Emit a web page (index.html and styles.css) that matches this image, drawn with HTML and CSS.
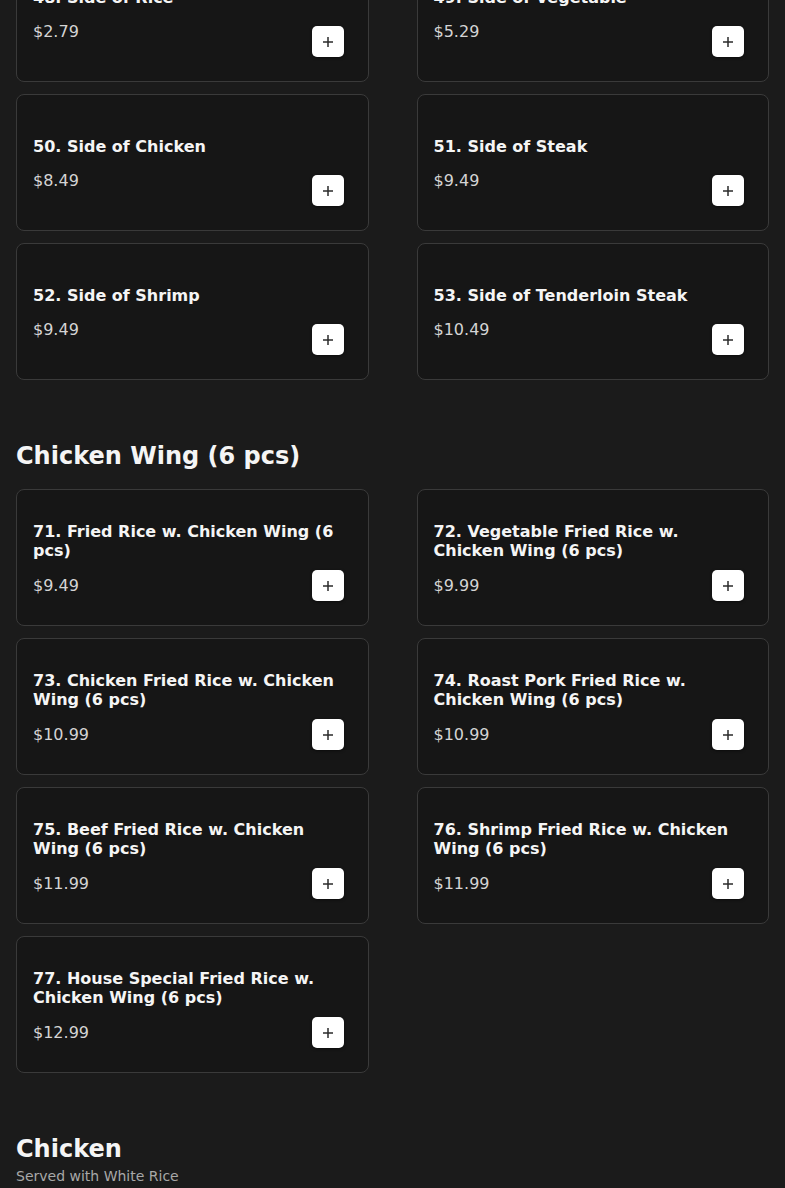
FILE: index.html
```html
<!DOCTYPE html>
<html>
    <head>
        <title>Menu</title>
        <meta name="viewport" content="width=device-width, initial-scale=1.0">
        <link rel="stylesheet" href="styles.css">
    </head>
    <body>
        <div class="menu">
            <div class="section">
                <div class="items">
                    <div class="item">
                        <div class="info">
                            <div class="name">48. Side of Rice</div>
                            <div class="price">$2.79</div>
                        </div>
                        <button class="add"><svg width="12" height="12" viewBox="0 0 12 12"><path d="M6 1v10M1 6h10" stroke="#2b2b2b" stroke-width="1.5"/></svg></button>
                    </div>
                    <div class="item">
                        <div class="info">
                            <div class="name">49. Side of Vegetable</div>
                            <div class="price">$5.29</div>
                        </div>
                        <button class="add"><svg width="12" height="12" viewBox="0 0 12 12"><path d="M6 1v10M1 6h10" stroke="#2b2b2b" stroke-width="1.5"/></svg></button>
                    </div>
                    <div class="item">
                        <div class="info">
                            <div class="name">50. Side of Chicken</div>
                            <div class="price">$8.49</div>
                        </div>
                        <button class="add"><svg width="12" height="12" viewBox="0 0 12 12"><path d="M6 1v10M1 6h10" stroke="#2b2b2b" stroke-width="1.5"/></svg></button>
                    </div>
                    <div class="item">
                        <div class="info">
                            <div class="name">51. Side of Steak</div>
                            <div class="price">$9.49</div>
                        </div>
                        <button class="add"><svg width="12" height="12" viewBox="0 0 12 12"><path d="M6 1v10M1 6h10" stroke="#2b2b2b" stroke-width="1.5"/></svg></button>
                    </div>
                    <div class="item">
                        <div class="info">
                            <div class="name">52. Side of Shrimp</div>
                            <div class="price">$9.49</div>
                        </div>
                        <button class="add"><svg width="12" height="12" viewBox="0 0 12 12"><path d="M6 1v10M1 6h10" stroke="#2b2b2b" stroke-width="1.5"/></svg></button>
                    </div>
                    <div class="item">
                        <div class="info">
                            <div class="name">53. Side of Tenderloin Steak</div>
                            <div class="price">$10.49</div>
                        </div>
                        <button class="add"><svg width="12" height="12" viewBox="0 0 12 12"><path d="M6 1v10M1 6h10" stroke="#2b2b2b" stroke-width="1.5"/></svg></button>
                    </div>
                </div>
            </div>

            <div class="section">
                <h2 class="section_title">Chicken Wing (6 pcs)</h2>
                <div class="items">
                    <div class="item">
                        <div class="info">
                            <div class="name">71. Fried Rice w. Chicken Wing (6 pcs)</div>
                            <div class="price">$9.49</div>
                        </div>
                        <button class="add"><svg width="12" height="12" viewBox="0 0 12 12"><path d="M6 1v10M1 6h10" stroke="#2b2b2b" stroke-width="1.5"/></svg></button>
                    </div>
                    <div class="item">
                        <div class="info">
                            <div class="name">72. Vegetable Fried Rice w. Chicken Wing (6 pcs)</div>
                            <div class="price">$9.99</div>
                        </div>
                        <button class="add"><svg width="12" height="12" viewBox="0 0 12 12"><path d="M6 1v10M1 6h10" stroke="#2b2b2b" stroke-width="1.5"/></svg></button>
                    </div>
                    <div class="item">
                        <div class="info">
                            <div class="name">73. Chicken Fried Rice w. Chicken Wing (6 pcs)</div>
                            <div class="price">$10.99</div>
                        </div>
                        <button class="add"><svg width="12" height="12" viewBox="0 0 12 12"><path d="M6 1v10M1 6h10" stroke="#2b2b2b" stroke-width="1.5"/></svg></button>
                    </div>
                    <div class="item">
                        <div class="info">
                            <div class="name">74. Roast Pork Fried Rice w. Chicken Wing (6 pcs)</div>
                            <div class="price">$10.99</div>
                        </div>
                        <button class="add"><svg width="12" height="12" viewBox="0 0 12 12"><path d="M6 1v10M1 6h10" stroke="#2b2b2b" stroke-width="1.5"/></svg></button>
                    </div>
                    <div class="item">
                        <div class="info">
                            <div class="name">75. Beef Fried Rice w. Chicken Wing (6 pcs)</div>
                            <div class="price">$11.99</div>
                        </div>
                        <button class="add"><svg width="12" height="12" viewBox="0 0 12 12"><path d="M6 1v10M1 6h10" stroke="#2b2b2b" stroke-width="1.5"/></svg></button>
                    </div>
                    <div class="item">
                        <div class="info">
                            <div class="name">76. Shrimp Fried Rice w. Chicken Wing (6 pcs)</div>
                            <div class="price">$11.99</div>
                        </div>
                        <button class="add"><svg width="12" height="12" viewBox="0 0 12 12"><path d="M6 1v10M1 6h10" stroke="#2b2b2b" stroke-width="1.5"/></svg></button>
                    </div>
                    <div class="item">
                        <div class="info">
                            <div class="name">77. House Special Fried Rice w. Chicken Wing (6 pcs)</div>
                            <div class="price">$12.99</div>
                        </div>
                        <button class="add"><svg width="12" height="12" viewBox="0 0 12 12"><path d="M6 1v10M1 6h10" stroke="#2b2b2b" stroke-width="1.5"/></svg></button>
                    </div>
                </div>
            </div>

            <div class="section">
                <h2 class="section_title">Chicken</h2>
                <div class="section_note">Served with White Rice</div>
            </div>
        </div>
    </body>
</html>
```

FILE: styles.css
```css
html, body {
    background:#1b1b1b;
}

body {
    margin:0;
    padding:0;
    font-family:"DejaVu Sans", sans-serif;
    color:#f2f2f2;
}

.menu {
    margin-top:-55px;
    padding:0 16px;
}

.section {
    margin-bottom:62px;
}

.section_title {
    margin:0;
    font-size:24px;
    line-height:29px;
    font-weight:700;
    color:#f5f5f5;
}

.section_title + .items {
    margin-top:18px;
}

.section_note {
    margin-top:4px;
    font-size:14px;
    line-height:17px;
    color:#a8a8a8;
}

.items {
    display:grid;
    grid-template-columns:1fr 1fr;
    column-gap:48px;
    row-gap:12px;
}

.item {
    display:grid;
    height:137px;
    box-sizing:border-box;
    padding:0 16px;
    background:#161616;
    border:1px solid #3a3a3a;
    border-radius:8px;
}

.info {
    grid-area:1 / 1;
    align-self:center;
    margin-top:2px;
}

.name {
    font-size:16px;
    line-height:1.2;
    font-weight:700;
    color:#f5f5f5;
}

.price {
    margin-top:15px;
    font-size:16px;
    line-height:1.2;
    color:#d4d4d4;
}

.add {
    grid-area:1 / 1;
    justify-self:end;
    align-self:end;
    display:flex;
    align-items:center;
    justify-content:center;
    width:32px;
    height:31px;
    margin:0 8px 24px 0;
    padding:0;
    background:#ffffff;
    border:0;
    border-radius:5px;
    box-shadow:0 1px 3px rgba(0,0,0,0.5);
}
```
